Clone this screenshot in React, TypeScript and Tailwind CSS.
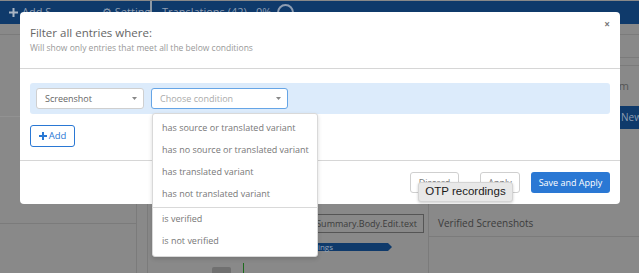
import React from 'react';

const conditionOptions = [
  ['has source or translated variant', 'has no source or translated variant', 'has translated variant', 'has not translated variant'],
  ['is verified', 'is not verified'],
];

const Caret: React.FC = () => (
  <svg width="5" height="3" viewBox="0 0 5 3" className="shrink-0">
    <path d="M0 0h5L2.5 3z" fill="#888" />
  </svg>
);

const Background: React.FC = () => (
  <div className="flex flex-col h-full">
    <div className="mt-px h-[26px] bg-[#0f3a6b] flex items-center text-[11px] text-[#8e9db2] whitespace-nowrap">
      <div className="w-[150px] h-full flex items-center pl-[9px] gap-[4px] overflow-hidden">
        <svg width="9" height="9" viewBox="0 0 9 9" className="shrink-0"><path d="M4.5 0v9M0 4.5h9" stroke="#a9b5c4" strokeWidth="2" /></svg>
        <span>Add S...</span>
        <span className="ml-[38px]">⚙ Settings</span>
      </div>
      <div className="w-[2px] h-full bg-[#8f9aa6] -mt-px"></div>
      <div className="flex items-center pl-[10px] gap-[6px]">
        <span>Translations (42) - 0%</span>
        <div className="w-[17px] h-[17px] rounded-full border-2 border-[#8e9db2]"></div>
      </div>
    </div>
    <div className="flex flex-1">
      <div className="w-[137px] border-r border-[#7b7b7b] flex flex-col">
        <div className="h-[11px] border-b border-[#7b7b7b]"></div>
        <div className="h-[82px] border-b border-[#929292]"></div>
        <div className="h-[107px] border-b border-[#7b7b7b]"></div>
      </div>
      <div className="w-[11px] border-r border-[#7b7b7b]"></div>
      <div className="flex-1 relative flex flex-col pt-[190px] pl-[60px]">
        <div className="flex justify-end w-[216px] h-[19px] border border-[#555] items-center pr-[6px] text-[9px] text-[#3c3c3c] overflow-hidden whitespace-nowrap">
          Dialog_-_Summary.Body.Edit.text
        </div>
        <div className="mt-[10px] ml-[60px] flex items-center">
          <div className="h-[8px] w-[120px] bg-[#0f3a6b] text-[8px] leading-[8px] text-[#93a3b8] flex justify-end pr-[55px] whitespace-nowrap">OTP recordings</div>
          <div className="w-0 h-0 border-y-[4px] border-y-transparent border-l-[4px] border-l-[#0f3a6b]"></div>
        </div>
        <div className="mt-[12px] flex items-end gap-[12px] pl-[4px]">
          <div className="w-[19px] h-[6px] bg-[#707070] rounded-t-[2px]"></div>
          <div className="w-px h-[10px] bg-[#1c6b1c]"></div>
        </div>
      </div>
      <div className="w-[211px] border-l border-[#7b7b7b] flex flex-col">
        <div className="h-[11px] border-b border-[#7b7b7b]"></div>
        <div className="h-[23px] border-b border-[#7b7b7b]"></div>
        <div className="h-[8px] border-b border-[#7b7b7b]"></div>
        <div className="h-[40px] flex items-center justify-end pr-[10px] text-[11px] text-[#555]">Custom</div>
        <div className="flex justify-end">
          <div className="h-[23px] w-[80px] bg-[#0f3a6b] text-[10px] text-[#8e9db2] flex items-center pl-[62px]">New</div>
        </div>
        <div className="mt-[63px] h-[45px] border-b border-[#7b7b7b] flex items-end pb-[5px] pl-[9px] text-[10px] text-[#3c3c3c]">
          Verified Screenshots
        </div>
      </div>
    </div>
  </div>
);

const FilterModal: React.FC = () => (
  <div className="absolute left-[20px] top-[12px] w-[600px] h-[192px] bg-white rounded-[4px] flex flex-col">
    <div className="relative h-[57px] border-b border-[#d6d6d6] px-[10px] pt-[13px]">
      <div className="text-[11.5px] leading-[16px] text-[#666]">Filter all entries where:</div>
      <div className="mt-px text-[8.5px] leading-[12px] text-[#999]">Will show only entries that meet all the below conditions</div>
      <button className="absolute right-[10px] top-[7px] text-[10px] font-bold leading-[10px] text-[#777]">×</button>
    </div>
    <div className="h-[91px] px-[10px] pt-[14px]">
      <div className="h-[31px] bg-[#dcebfb] rounded-[3px] flex items-center gap-[7px] px-[6px]">
        <div className="w-[108px] h-[21px] bg-white border border-[#cfcfcf] rounded-[3px] flex items-center justify-between pl-[8px] pr-[6px] text-[9px] text-[#666]">
          <span>Screenshot</span>
          <Caret />
        </div>
        <div className="relative w-[137px] h-[21px] bg-white border border-[#66a5e6] rounded-[3px] flex items-center justify-between pl-[8px] pr-[6px] text-[9px] text-[#aaa]">
          <span>Choose condition</span>
          <Caret />
          <div className="absolute left-0 top-[24px] w-[166px] bg-white border border-[#d9d9d9] rounded-[3px] shadow-[0_2px_4px_rgba(0,0,0,0.15)] pt-[3px] pb-[4px] z-10">
            {conditionOptions.map((group, gi) => (
              <div key={gi} className={gi > 0 ? 'border-t border-[#d9d9d9] mt-[2px]' : ''}>
                {group.map(opt => (
                  <div key={opt} className="h-[22px] flex items-center pl-[9px] text-[9px] text-[#777] whitespace-nowrap">{opt}</div>
                ))}
              </div>
            ))}
          </div>
        </div>
      </div>
      <button className="mt-[11px] h-[22px] w-[45px] border border-[#2a78d4] rounded-[3px] flex items-center justify-center gap-[2px] text-[9.5px] text-[#2a78d4]">
        <svg width="8" height="8" viewBox="0 0 8 8"><path d="M4 0v8M0 4h8" stroke="#2a78d4" strokeWidth="2" /></svg>
        Add
      </button>
    </div>
    <div className="flex-1 border-t border-[#d6d6d6] flex items-start justify-end pr-[10px] pt-[11px]">
      <button className="w-[49px] h-[21px] border border-[#cfcfcf] rounded-[3px] text-[9px] text-[#777]">Discard</button>
      <button className="ml-[21px] w-[40px] h-[21px] border border-[#cfcfcf] rounded-[3px] text-[9px] text-[#777]">Apply</button>
      <button className="ml-[11px] w-[79px] h-[21px] bg-[#2a78d4] rounded-[3px] text-[9px] text-white">Save and Apply</button>
    </div>
  </div>
);

export default function App() {
  return (
    <div className="relative w-[639px] h-[273px] overflow-hidden bg-[#898989] font-['Open_Sans',sans-serif]">
      <Background />
      <FilterModal />
      <div className="absolute left-[418px] top-[182px] w-[95px] h-[20px] bg-[#e8e8e8] border border-[#d4d4d4] rounded-[3px] shadow-[0_1px_3px_rgba(0,0,0,0.2)] flex items-center justify-center text-[11.5px] text-[#1a1a1a] font-['Liberation_Sans',sans-serif]">
        OTP recordings
      </div>
    </div>
  );
}
